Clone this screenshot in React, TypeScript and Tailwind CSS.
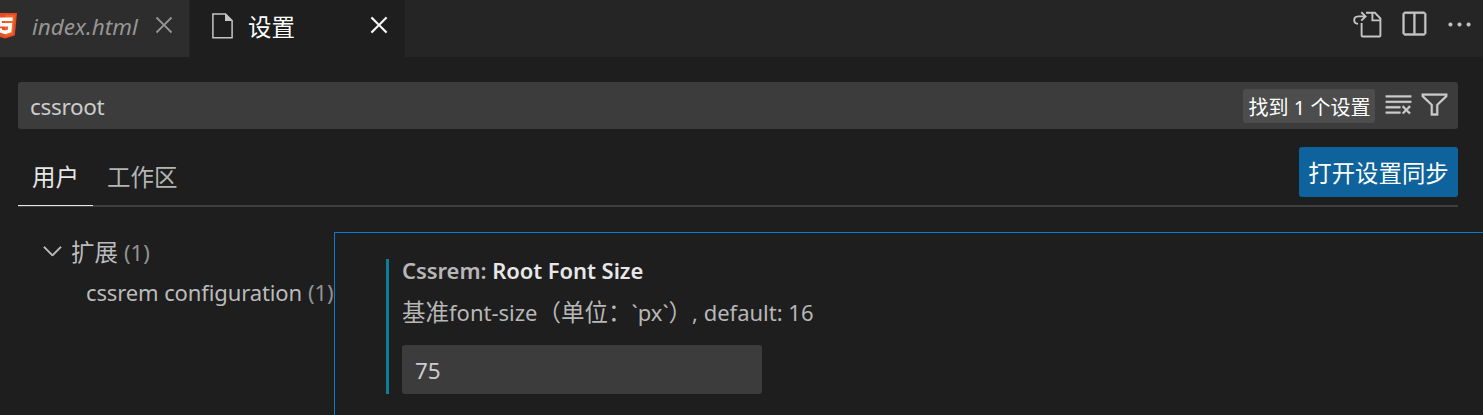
import React from 'react';
import {
  VscChevronDown,
  VscClearAll,
  VscClose,
  VscEllipsis,
  VscFilter,
  VscSplitHorizontal,
} from 'react-icons/vsc';

function HtmlIcon() {
  return (
    <svg viewBox="0 0 24 26" className="-ml-[7px] h-[26px] w-6 shrink-0">
      <path d="M0 0h24l-2.2 22.5L12 25.5l-9.8-3z" fill="#e44d26" />
      <path d="M12 2h9.7l-1.8 19.2L12 23.5z" fill="#f16529" />
      <path
        d="M4.6 4.6h15.2l-.3 3.4H8.8l.2 2.1h10.3l-.9 9.1-6.4 2-6.2-2-.4-4h3.5l.2 1.5 2.9.9 2.9-.9.3-3.1H5.6z"
        fill="#fff"
      />
    </svg>
  );
}

function FileIcon() {
  return (
    <svg viewBox="0 0 21 26" className="h-[26px] w-[21px] shrink-0">
      <path d="M.9.9h12.6l6.6 6.6v17.3H.9z" fill="none" stroke="#c5c5c5" strokeWidth="1.5" />
      <path d="M13 .5 20.5 8H13z" fill="#c5c5c5" />
    </svg>
  );
}

function GoToFileIcon() {
  return (
    <svg viewBox="0 0 29 29" className="size-[29px]" fill="none" stroke="currentColor" strokeWidth="1.9">
      <path d="M13 2.7h8.8l5.6 5.8v17q0 1-1 1H9.6q-1 0-1-1V13" />
      <path d="M19.4 3v7.4h7.8" />
      <path d="M12.5 6.4H5.2Q1.2 6.6 1.2 10.2 1.3 13.5 5 13.8M8.3 2.2l4.3 4.2-4.3 4.2" />
    </svg>
  );
}

function TabBar() {
  return (
    <header className="flex h-[57px] bg-[#252526]">
      <div className="flex w-[189px] items-start bg-[#2d2d2d] pt-[13px] text-[#969696]">
        <HtmlIcon />
        <span className="ml-[15px] mt-[-3px] w-[107px] text-[22.5px] leading-[34px] italic">index.html</span>
        <VscClose className="ml-[10px] -mt-[3px] size-[30px] shrink-0" />
      </div>
      <div className="ml-px flex w-[215px] items-start bg-[#1e1e1e] pl-[22px] pt-[13px] text-white">
        <FileIcon />
        <span className="ml-[15px] mt-[-3px] text-[23.5px] leading-[34px]">设置</span>
        <VscClose className="ml-[69px] -mt-[3px] size-[30px] shrink-0" strokeWidth={0.15} />
      </div>
      <div className="ml-auto flex items-start pr-[9px] pt-[10px] text-[#c5c5c5]">
        <GoToFileIcon />
        <VscSplitHorizontal className="ml-[17px] size-[29px]" strokeWidth={0.25} />
        <VscEllipsis className="ml-[17px] size-[29px]" strokeWidth={0.3} />
      </div>
    </header>
  );
}

function SearchBox() {
  return (
    <div className="flex h-[47px] items-center rounded-[3px] bg-[#3c3c3c] pl-3 pr-[9px] text-[#cccccc]">
      <span className="pt-[2px] text-[22.5px] leading-[34px] tracking-[-0.3px]">cssroot</span>
      <span className="ml-auto mt-px flex h-[34px] w-[132px] items-center justify-center rounded-[3px] bg-[#4d4d4d] pl-px pt-[4px] text-[20px] leading-none text-white">
        找到 1 个设置
      </span>
      <VscClearAll className="-mt-[2px] ml-[9px] size-[29px]" strokeWidth={0.25} />
      <VscFilter className="-mt-[2px] ml-[7px] size-[29px]" strokeWidth={0.25} />
    </div>
  );
}

function ScopeTabs() {
  return (
    <div className="mt-[18px] flex h-[60px] items-start border-b-2 border-[#3f3f3f]">
      <span className="box-content h-[58px] w-[75px] border-b border-[#e7e7e7] text-center text-[23.5px] leading-[60px] text-[#e7e7e7]">
        用户
      </span>
      <span className="ml-[14px] text-[23.5px] leading-[60px] text-[#b4b4b4]">工作区</span>
      <button className="ml-auto h-[50px] w-[159px] rounded-[3px] bg-[#0e639c] text-[23.4px] leading-[52px] text-white">
        打开设置同步
      </button>
    </div>
  );
}

function Outline() {
  return (
    <nav className="w-[334px] shrink-0 whitespace-nowrap text-[22px] text-[#bbbbbb]">
      <div className="flex h-10 items-center pl-[38px]">
        <VscChevronDown className="-mt-[4px] size-[29px]" strokeWidth={0.2} />
        <span className="ml-1 mt-[2px] text-[23.5px]">扩展</span>
        <span className="ml-[6px] text-[#929292]">(1)</span>
      </div>
      <div className="flex h-10 items-center pl-[86px]">
        <span className="tracking-[-0.12px]">cssrem configuration</span>
        <span className="ml-[6px] text-[#929292]">(1)</span>
      </div>
    </nav>
  );
}

function Setting() {
  return (
    <section className="flex-1 border-l border-t border-[#007fd4] pl-[51px] pt-[26px]">
      <div className="flex h-[135px] flex-col border-l-[3px] border-[#0c7d9d] pl-[13px] whitespace-nowrap text-[#b7b7b7]">
        <h3 className="h-6 text-[22px] leading-[22px] font-semibold tracking-[-0.06px]">
          Cssrem: <span className="text-[#e7e7e7]">Root Font Size</span>
        </h3>
        <p className="mt-[12px] h-[35px] text-[22px] leading-[34px]">
          <span className="text-[23.5px]">基准</span>font-size<span className="text-[23.5px]">（单位：</span>`px`
          <span className="text-[23.5px]">）</span>, default: 16
        </p>
        <div className="mt-[15px] h-[49px] w-[360px] rounded-[3px] bg-[#3c3c3c] pl-[13px] text-[22.5px] leading-[52px] text-[#cccccc]">
          75
        </div>
      </div>
    </section>
  );
}

export default function App() {
  return (
    <div className="flex h-[415px] w-[1483px] flex-col overflow-hidden bg-[#1e1e1e] font-['Noto_Sans','Noto_Sans_CJK_SC',sans-serif]">
      <TabBar />
      <div className="pl-[18px] pr-[25px] pt-[25px]">
        <SearchBox />
        <ScopeTabs />
      </div>
      <main className="mt-[25px] flex flex-1">
        <Outline />
        <Setting />
      </main>
    </div>
  );
}
